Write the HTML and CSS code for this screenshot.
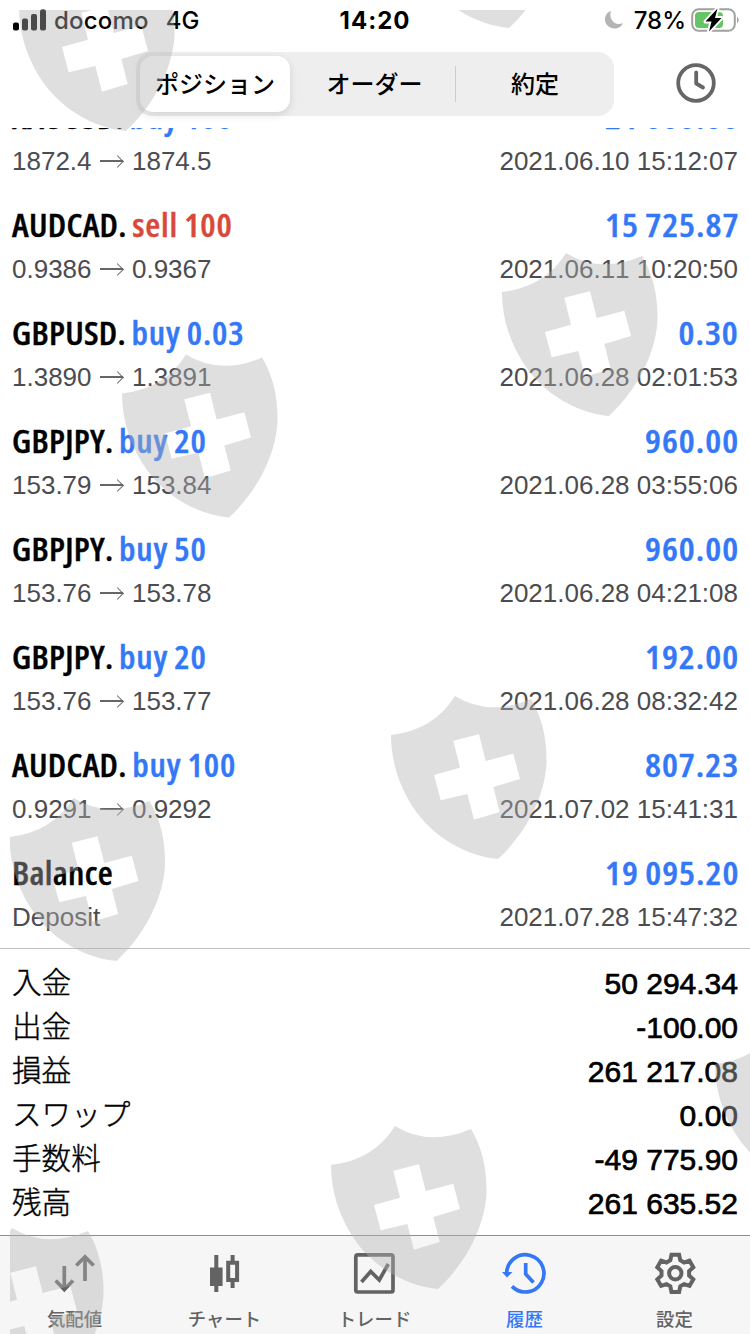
FILE: index.html
```html
<!DOCTYPE html>
<html lang="ja">
<head>
    <meta charset="UTF-8">
    <meta name="viewport" content="width=device-width, initial-scale=1.0">
    <title>履歴</title>
    <link rel="stylesheet" href="styles.css">
</head>
<body>
    <div class="screen">
        <div class="status-bar">
            <div class="status-left">
                <svg class="signal" width="34" height="22" viewBox="0 0 34 22">
                    <rect x="0" y="13.5" width="6" height="8" rx="2"/>
                    <rect x="9" y="9.5" width="6" height="12" rx="2"/>
                    <rect x="18" y="5" width="6" height="16.5" rx="2"/>
                    <rect x="27" y="0.5" width="6" height="21" rx="2"/>
                </svg>
                <span class="carrier">docomo</span>
                <span class="network">4G</span>
            </div>
            <div class="time">14:20</div>
            <div class="status-right">
                <svg width="20" height="20" viewBox="0 0 20 20">
                    <path d="M7 1C1 3 -1 10 3 15C7 20 16 20 19 13C15 15 10 14 8 10C6 7 6 4 7 1Z" fill="#b4b4b7"/>
                </svg>
                <span class="percent">78%</span>
                <svg class="battery" width="50" height="28" viewBox="0 0 50 28">
                    <rect x="2.2" y="3.2" width="42.6" height="21.6" rx="6.5" fill="none" stroke="#a0a0a0" stroke-width="2"/>
                    <rect x="5" y="6" width="28" height="16" rx="4" fill="#65c466"/>
                    <path d="M47 10.5Q50.4 14 47 17.5Z" fill="#a0a0a0"/>
                    <path d="M27.5 2.5L15.5 15.5H21.5L19 25.5L31.5 12H25Z" stroke="#fff" stroke-width="4" stroke-linejoin="round"/>
                    <path d="M27.5 2.5L15.5 15.5H21.5L19 25.5L31.5 12H25Z"/>
                </svg>
            </div>
        </div>

        <div class="nav-bar">
            <div class="segments">
                <div class="segment active">ポジション</div>
                <div class="segment">オーダー</div>
                <div class="segment last">約定</div>
            </div>
            <svg class="clock" width="42" height="42" viewBox="0 0 42 42">
                <circle cx="21" cy="21" r="17.8"/>
                <path d="M21.2 10.5V21.5L28 25.5"/>
            </svg>
        </div>

        <div class="deals">
            <div class="deal">
                <div class="line"><div class="symbol">XAUUSD. <span class="buy">buy 100</span></div><div class="profit">21 000.00</div></div>
                <div class="details"><span>1872.4 <i></i> 1874.5</span><span>2021.06.10 15:12:07</span></div>
            </div>
            <div class="deal">
                <div class="line"><div class="symbol">AUDCAD. <span class="sell">sell 100</span></div><div class="profit">15 725.87</div></div>
                <div class="details"><span>0.9386 <i></i> 0.9367</span><span>2021.06.11 10:20:50</span></div>
            </div>
            <div class="deal">
                <div class="line"><div class="symbol">GBPUSD. <span class="buy">buy 0.03</span></div><div class="profit">0.30</div></div>
                <div class="details"><span>1.3890 <i></i> 1.3891</span><span>2021.06.28 02:01:53</span></div>
            </div>
            <div class="deal">
                <div class="line"><div class="symbol">GBPJPY. <span class="buy">buy 20</span></div><div class="profit">960.00</div></div>
                <div class="details"><span>153.79 <i></i> 153.84</span><span>2021.06.28 03:55:06</span></div>
            </div>
            <div class="deal">
                <div class="line"><div class="symbol">GBPJPY. <span class="buy">buy 50</span></div><div class="profit">960.00</div></div>
                <div class="details"><span>153.76 <i></i> 153.78</span><span>2021.06.28 04:21:08</span></div>
            </div>
            <div class="deal">
                <div class="line"><div class="symbol">GBPJPY. <span class="buy">buy 20</span></div><div class="profit">192.00</div></div>
                <div class="details"><span>153.76 <i></i> 153.77</span><span>2021.06.28 08:32:42</span></div>
            </div>
            <div class="deal">
                <div class="line"><div class="symbol">AUDCAD. <span class="buy">buy 100</span></div><div class="profit">807.23</div></div>
                <div class="details"><span>0.9291 <i></i> 0.9292</span><span>2021.07.02 15:41:31</span></div>
            </div>
            <div class="deal">
                <div class="line"><div class="symbol balance">Balance</div><div class="profit">19 095.20</div></div>
                <div class="details"><span>Deposit</span><span>2021.07.28 15:47:32</span></div>
            </div>
        </div>

        <div class="summary">
            <div class="total"><span>入金</span><b>50 294.34</b></div>
            <div class="total"><span>出金</span><b>-100.00</b></div>
            <div class="total"><span>損益</span><b>261 217.08</b></div>
            <div class="total"><span>スワップ</span><b>0.00</b></div>
            <div class="total"><span>手数料</span><b>-49 775.90</b></div>
            <div class="total"><span>残高</span><b>261 635.52</b></div>
        </div>

        <div class="tab-bar">
            <div class="tab">
                <svg width="44" height="44" viewBox="0 0 44 44">
                    <path d="M11.3 14V37M2.7 28.5L11.3 37.5L20 28.5M32 29V5M23.3 13.5L32 4.8L40.6 13.5"/>
                </svg>
                <span>気配値</span>
            </div>
            <div class="tab">
                <svg width="44" height="44" viewBox="0 0 44 44">
                    <path class="solid" d="M7 15.5h12.6V34H7z"/>
                    <path class="wick" d="M13.3 3V40M29.6 3V10M29.6 29V36M25.2 10.7h8.9V28h-8.9z"/>
                </svg>
                <span>チャート</span>
            </div>
            <div class="tab">
                <svg width="44" height="44" viewBox="0 0 44 44">
                    <rect x="2.8" y="2.8" width="37.2" height="37.2" rx="2"/>
                    <path d="M8.5 30L17.7 19.5L26.3 28L35.3 12"/>
                </svg>
                <span>トレード</span>
            </div>
            <div class="tab active">
                <svg width="44" height="44" viewBox="0 0 44 44">
                    <path d="M3.7 21.3A18.6 18.6 0 1 1 9 34.4M22.7 11V22L30.5 30.5"/>
                    <path class="solid" d="M-1 20H9.5L4 25.5Z"/>
                </svg>
                <span>履歴</span>
            </div>
            <div class="tab">
                <svg width="44" height="44" viewBox="0 0 44 44">
                    <g class="gear" transform="translate(22.3 21.3)">
                        <path d="M-5 -13L-3.8 -18.6H3.8L5 -13L8.8 -10.8L14.2 -12.6L18 -6L13.8 -2.2V2.2L18 6L14.2 12.6L8.8 10.8L5 13L3.8 18.6H-3.8L-5 13L-8.8 10.8L-14.2 12.6L-18 6L-13.8 2.2V-2.2L-18 -6L-14.2 -12.6L-8.8 -10.8Z"/>
                        <circle r="6.2"/>
                    </g>
                </svg>
                <span>設定</span>
            </div>
        </div>

        <!-- shield watermark -->
        <svg class="watermark" width="740" height="1324" viewBox="10 10 740 1324">
            <defs>
                <path id="shield" fill-rule="evenodd" d="M0 39Q43 34 64 0Q98 21 140 3C152 23 156 45 155.5 68C153 105 132 140 107 163C75 160 45 142 26 117C8 92 0 65 0 39ZM62.3 44.7L88 38.3L94.7 65L122.3 57.7L129 83L102.3 91L108.7 116L83 123.7L76.3 98L49.7 104.3L43 79L69 71.7Z"/>
            </defs>
            <use href="#shield" x="19" y="-32"/>
            <use href="#shield" x="402" y="-135"/>
            <use href="#shield" x="502" y="253"/>
            <use href="#shield" x="122" y="354.5"/>
            <use href="#shield" x="391" y="696"/>
            <use href="#shield" x="9.5" y="798"/>
            <use href="#shield" x="715" y="1025"/>
            <use href="#shield" x="331" y="1126"/>
            <use href="#shield" x="-52" y="1228"/>
        </svg>
    </div>
</body>
</html>
```
FILE: styles.css
```css
* {
    box-sizing: border-box;
}

body {
    margin: 0;
    background-color: #fff;
    color: #000;
    font-family: "Liberation Sans", "Noto Sans CJK JP", sans-serif;
}

.screen {
    position: relative;
    display: flex;
    flex-direction: column;
    width: 750px;
    height: 1334px;
    overflow: hidden;
}

/* status bar */
.status-bar {
    display: grid;
    grid-template-columns: 1fr auto 1fr;
    align-items: center;
    height: 40px;
    padding: 0 10px 0 13px;
    font: 500 24px/38px Inter, sans-serif;
}

.status-left,
.status-right {
    display: flex;
    align-items: center;
}

.status-right {
    justify-content: flex-end;
}

.carrier,
.network,
.time,
.percent {
    padding-top: 2px;
}

.carrier {
    margin-left: 7px;
    letter-spacing: 0.2px;
}

.network {
    margin-left: 17px;
}

.time {
    margin-right: 3px;
    font-weight: 700;
    letter-spacing: 1px;
}

.percent {
    margin: 0 4px 0 10px;
}

/* segmented control */
.nav-bar {
    display: flex;
    align-items: flex-start;
    justify-content: flex-end;
    gap: 61px;
    height: 88px;
    padding: 12px 33px 0 0;
}

.segments {
    display: flex;
    width: 478px;
    height: 64px;
    padding: 4px 0 4px 4px;
    border-radius: 16px;
    background-color: #eee;
}

.segment {
    flex: 0 0 160px;
    text-align: center;
    font: 500 24px/54px "Noto Sans CJK JP", sans-serif;
}

.segment.active {
    flex: 0 0 150px;
    margin-right: 5px;
    border-radius: 13px;
    background-color: #fff;
    box-shadow: 0 3px 8px rgba(0, 0, 0, 0.12);
}

.segment:nth-child(2) {
    padding-right: 1px;
}

.segment.last {
    flex: 1;
    height: 36px;
    margin-top: 10px;
    border-left: 1px solid #ccc;
    line-height: 34px;
}

.clock {
    margin-top: 10px;
    fill: none;
    stroke: #666;
    stroke-width: 3.8;
    stroke-linecap: round;
    stroke-linejoin: round;
}

/* deals list */
.deals {
    display: flex;
    flex-direction: column;
    justify-content: flex-end;
    height: 821px;
    overflow: hidden;
    border-bottom: 1px solid #c0c0c2;
}

.deal {
    flex: none;
    height: 108px;
    padding: 9px 12px 0;
}

.line {
    display: flex;
    justify-content: space-between;
    height: 49px;
    font: 600 33px/48px "Open Sans", sans-serif;
    font-stretch: 75%;
    font-kerning: none;
    white-space: nowrap;
}

.symbol {
    letter-spacing: 0.3px;
    word-spacing: -1px;
    -webkit-text-stroke: 0.4px;
    transform: scaleX(1.04);
    transform-origin: left;
}

.profit {
    margin-right: -1px;
    color: #3478f6;
    letter-spacing: 0.9px;
    word-spacing: -1px;
    -webkit-text-stroke: 0.4px;
    transform: scaleX(1.08);
    transform-origin: right;
}

.buy,
.sell {
    letter-spacing: 0.8px;
}

.buy {
    color: #3478f6;
}

.sell {
    color: #d9493a;
}

.details {
    display: flex;
    justify-content: space-between;
    color: #4c4c50;
    font-size: 26px;
    line-height: 38px;
    font-kerning: none;
}

/* thin arrow between the open and close price */
.details i {
    display: inline-block;
    position: relative;
    width: 23px;
    height: 2px;
    margin: 0 1.5px;
    vertical-align: 8px;
    background-color: #66666a;
}

.details i::after {
    content: "";
    position: absolute;
    right: 1px;
    top: -3px;
    width: 8px;
    height: 8px;
    border-top: 1.5px solid #66666a;
    border-right: 1.5px solid #66666a;
    transform: rotate(45deg);
}

/* totals */
.summary {
    flex: 1;
    padding: 12px 12px 0;
}

.total {
    display: flex;
    justify-content: space-between;
    height: 44px;
    font: 300 29.6px/40px "Noto Sans CJK JP", sans-serif;
    -webkit-text-stroke: 0.4px #000;
}

.total b {
    font: 400 30px/46px "Liberation Sans", sans-serif;
    -webkit-text-stroke: 0.7px #000;
}

/* bottom tabs */
.tab-bar {
    display: flex;
    height: 99px;
    border-top: 1px solid #8e8e8e;
    background-color: #f6f6f6;
}

.tab {
    flex: 1;
    display: flex;
    flex-direction: column;
    align-items: center;
    padding: 16px 1px 0 0;
    color: #636363;
    font: 500 18.4px/26px "Noto Sans CJK JP", sans-serif;
}

.tab svg {
    overflow: visible;
    margin-bottom: 9px;
    fill: none;
    stroke: currentColor;
    stroke-width: 3.7;
}

.tab .solid {
    fill: currentColor;
    stroke: none;
}

.tab .wick,
.tab .gear {
    stroke-width: 4;
}

.tab.active {
    color: #3478f6;
}

.watermark {
    position: absolute;
    left: 10px;
    top: 10px;
    fill: #b2b2b2;
    fill-opacity: 0.416;
    pointer-events: none;
}
```
